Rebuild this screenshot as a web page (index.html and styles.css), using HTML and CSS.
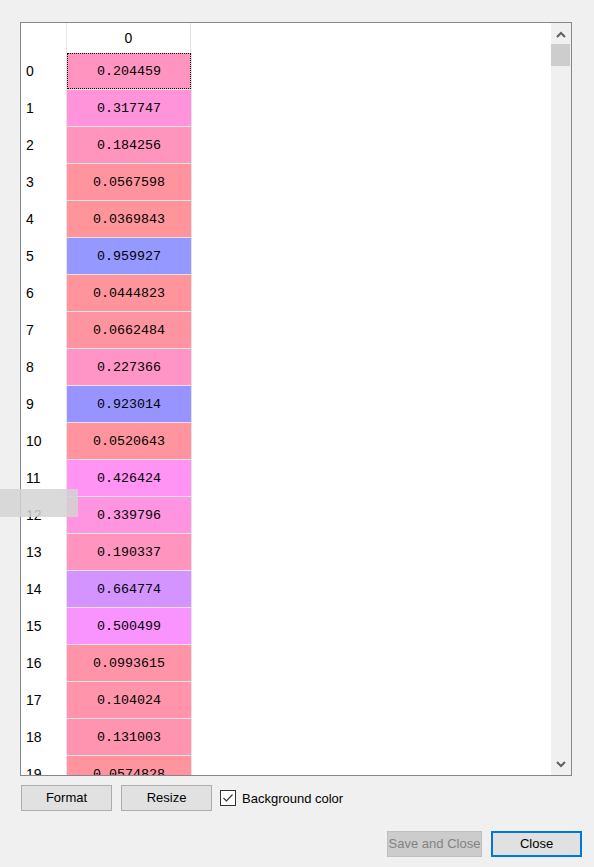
FILE: index.html
```html
<!DOCTYPE html>
<html>
<head>
<meta charset="utf-8">
<link rel="stylesheet" href="styles.css">
</head>
<body>
<div class="dialog">
  <div class="frame">
    <div class="grid">
      <div class="hrow"><div class="corner"></div><div class="hcell">0</div></div>
      <div class="row"><div class="rlabel">0</div><div class="cell focus" style="background:#ff94c1">0.204459</div></div>
      <div class="row"><div class="rlabel">1</div><div class="cell" style="background:#ff94db">0.317747</div></div>
      <div class="row"><div class="rlabel">2</div><div class="cell" style="background:#ff94bc">0.184256</div></div>
      <div class="row"><div class="rlabel">3</div><div class="cell" style="background:#ff949f">0.0567598</div></div>
      <div class="row"><div class="rlabel">4</div><div class="cell" style="background:#ff949a">0.0369843</div></div>
      <div class="row"><div class="rlabel">5</div><div class="cell" style="background:#9498ff">0.959927</div></div>
      <div class="row"><div class="rlabel">6</div><div class="cell" style="background:#ff949c">0.0444823</div></div>
      <div class="row"><div class="rlabel">7</div><div class="cell" style="background:#ff94a1">0.0662484</div></div>
      <div class="row"><div class="rlabel">8</div><div class="cell" style="background:#ff94c6">0.227366</div></div>
      <div class="row"><div class="rlabel">9</div><div class="cell" style="background:#9894ff">0.923014</div></div>
      <div class="row"><div class="rlabel">10</div><div class="cell" style="background:#ff949e">0.0520643</div></div>
      <div class="row"><div class="rlabel">11</div><div class="cell" style="background:#ff94f4">0.426424</div></div>
      <div class="row"><div class="rlabel">12</div><div class="cell" style="background:#ff94e0">0.339796</div></div>
      <div class="row"><div class="rlabel">13</div><div class="cell" style="background:#ff94be">0.190337</div></div>
      <div class="row"><div class="rlabel">14</div><div class="cell" style="background:#d394ff">0.664774</div></div>
      <div class="row"><div class="rlabel">15</div><div class="cell" style="background:#f994ff">0.500499</div></div>
      <div class="row"><div class="rlabel">16</div><div class="cell" style="background:#ff94a9">0.0993615</div></div>
      <div class="row"><div class="rlabel">17</div><div class="cell" style="background:#ff94aa">0.104024</div></div>
      <div class="row"><div class="rlabel">18</div><div class="cell" style="background:#ff94b0">0.131003</div></div>
      <div class="row"><div class="rlabel">19</div><div class="cell" style="background:#ff949f">0.0574828</div></div>
    </div>
    <div class="vscroll">
      <div class="sbtn"><svg width="10" height="7" viewBox="0 0 10 7"><polyline points="1,6 5,2 9,6" fill="none" stroke="#606060" stroke-width="2"/></svg></div>
      <div class="thumb"></div>
      <div class="track"></div>
      <div class="sbtn down"><svg width="10" height="7" viewBox="0 0 10 7"><polyline points="1,1 5,5 9,1" fill="none" stroke="#606060" stroke-width="2"/></svg></div>
    </div>
  </div>
  <div class="toolbar">
    <button class="btn">Format</button>
    <button class="btn">Resize</button>
    <label class="check">
      <svg width="16" height="16" viewBox="0 0 16 16"><rect x="0.5" y="0.5" width="15" height="15" fill="#fff" stroke="#333"/><polyline points="3.5,8 6.5,11 12.5,4.5" fill="none" stroke="#333" stroke-width="1.2"/></svg>
      <span>Background color</span>
    </label>
  </div>
  <div class="actions">
    <button class="btn wide disabled">Save and Close</button>
    <button class="btn default">Close</button>
  </div>
  <div class="ghost"></div>
</div>
</body>
</html>
```
FILE: styles.css
```css
html, body {
  margin: 0;
  padding: 0;
  background: #f0f0f0;
}
body {
  font-family: "Segoe UI", "Liberation Sans", Arial, sans-serif;
  font-size: 13px;
  color: #000;
}
.dialog {
  position: relative;
  width: 594px;
  height: 867px;
  padding-top: 22px;
  box-sizing: border-box;
}
.frame {
  margin-left: 20px;
  width: 552px;
  height: 754px;
  box-sizing: border-box;
  border: 1px solid #828790;
  background: #fff;
  display: flex;
  overflow: hidden;
}
.grid {
  flex: 1;
  display: flex;
  flex-direction: column;
  overflow: hidden;
}
.hrow {
  display: flex;
  height: 30px;
  flex: none;
}
.corner {
  width: 45px;
  border-right: 1px solid #e6e6e6;
}
.hcell {
  width: 124px;
  border-right: 1px solid #e3e3e3;
  display: flex;
  align-items: center;
  justify-content: center;
  font-size: 14px;
  padding-bottom: 1px;
  box-sizing: border-box;
}
.row {
  display: flex;
  height: 37px;
  flex: none;
}
.rlabel {
  width: 46px;
  border-right: 1px solid #e6e6e6;
  padding-left: 5px;
  box-sizing: border-box;
  display: flex;
  align-items: center;
  font-size: 14px;
  padding-bottom: 1px;
}
.cell {
  position: relative;
  width: 124px;
  height: 36px;
  box-sizing: content-box;
  border-right: 1px solid #e3e3e3;
  border-bottom: 1px solid #e3e3e3;
  display: flex;
  align-items: center;
  justify-content: center;
  font-family: "Liberation Mono", "DejaVu Sans Mono", monospace;
  font-size: 13.33px;
}
.cell.focus::after {
  content: "";
  position: absolute;
  inset: 0;
  border: 1px dotted #000;
}
.vscroll {
  width: 20px;
  flex: none;
  background: #f0f0f0;
  display: flex;
  flex-direction: column;
}
.sbtn {
  height: 21px;
  display: flex;
  align-items: center;
  justify-content: center;
  flex: none;
}
.sbtn svg {
  display: block;
  margin-top: 1px;
}
.sbtn.down svg {
  margin-top: -1px;
}
.thumb {
  height: 22px;
  margin-right: 1px;
  background: #cdcdcd;
  flex: none;
}
.track {
  flex: 1;
}
.toolbar {
  display: flex;
  align-items: center;
  margin: 9px 0 0 21px;
  height: 26px;
}
.btn {
  font-family: "Segoe UI", "Liberation Sans", Arial, sans-serif;
  font-size: 13px;
  color: #000;
  width: 91px;
  height: 26px;
  box-sizing: border-box;
  background: #e1e1e1;
  border: 1px solid #adadad;
  padding: 0 0 1px;
  margin: 0;
}
.toolbar .btn + .btn {
  margin-left: 9px;
}
.check {
  display: flex;
  align-items: center;
  margin-left: 8px;
}
.check svg {
  display: block;
}
.check span {
  margin-left: 6px;
  font-size: 13px;
}
.actions {
  display: flex;
  justify-content: flex-end;
  gap: 9px;
  margin: 20px 12px 0 0;
}
.btn.wide {
  width: 95px;
}
.btn.disabled {
  background: #cccccc;
  border-color: #bfbfbf;
  color: #838383;
}
.btn.default {
  border: 2px solid #0078d7;
}
.ghost {
  position: absolute;
  left: 0;
  top: 489px;
  width: 78px;
  height: 28px;
  background: rgba(212, 212, 212, 0.85);
}
```
